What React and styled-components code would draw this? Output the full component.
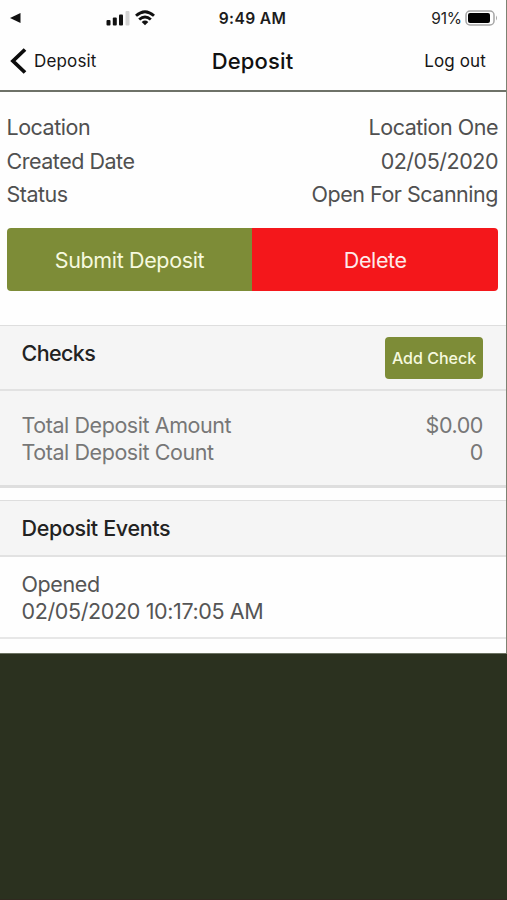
import React from 'react';
import styled, { createGlobalStyle } from 'styled-components';

const GlobalStyle = createGlobalStyle`
  * {
    box-sizing: border-box;
  }
  body {
    margin: 0;
    background: #2b311f;
    font-family: Inter, "Liberation Sans", sans-serif;
  }
`

const Phone = styled.div`
  width: 507px;
  height: 900px;
  display: flex;
  flex-direction: column;
  background: #2b311f;
  border-bottom: 1px solid #30291f;
  overflow: hidden;
`
const Screen = styled.div`
  height: 654px;
  background: #fefefe;
  border-right: 1px solid #7d8272;
  border-bottom: 1px solid #6c7261;
`

// status bar
const StatusBar = styled.div`
  height: 36px;
  display: grid;
  grid-template-columns: 1fr auto 1fr;
  align-items: center;
  padding: 0 10px 0 9px;
`
const Signals = styled.div`
  display: flex;
  align-items: center;
  padding-left: 1px;
`
const BackApp = styled.svg`
  margin-right: 85px;
`
const Bars = styled.svg`
  margin-right: 5px;
`
const Clock = styled.span`
  font-size: 15.6px;
  font-weight: 600;
  letter-spacing: .35px;
  color: #1c1c1c;
`
const Power = styled.div`
  display: flex;
  align-items: center;
  justify-content: flex-end;
  gap: 3px;
  margin-right: -2px;
  font-size: 15.5px;
  letter-spacing: -.1px;
  color: #222;
`

// navigation
const NavBar = styled.nav`
  height: 56px;
  display: grid;
  grid-template-columns: 1fr auto 1fr;
  align-items: center;
  padding: 0 11px 5px 10px;
  border-bottom: 2px solid #6e7268;
`
const NavLink = styled.a`
  display: flex;
  align-items: center;
  justify-self: ${props => props.$end ? 'end' : 'start'};
  margin-right: ${props => props.$end ? '9px' : '0'};
  gap: 7px;
  font-size: 17px;
  letter-spacing: .15px;
  color: #161616;
`
const Title = styled.h1`
  margin: 0;
  font-size: 22px;
  font-weight: 500;
  letter-spacing: .15px;
  color: #111;
`

// deposit summary
const Summary = styled.section`
  height: 136px;
  padding: 18px 8px 0 6.5px;
`
const SummaryRow = styled.div`
  height: 33.8px;
  display: flex;
  align-items: center;
  justify-content: space-between;
  font-size: 21.5px;
  letter-spacing: -.48px;
  color: #505050;
`
const Actions = styled.div`
  height: 63px;
  margin: 0 8px 0 6.5px;
  display: flex;
  border-radius: 4px;
  overflow: hidden;
`
const ActionButton = styled.button`
  width: ${props => props.$danger ? '246.5px' : '245px'};
  border: 0;
  padding: 0 0 0 1px;
  background: ${props => props.$danger ? '#f4171b' : '#7d8c37'};
  color: ${props => props.$danger ? '#fdeaea' : '#f6f9df'};
  font-family: inherit;
  font-size: 21.5px;
  letter-spacing: -.36px;
`

// checks and events
const SectionHeader = styled.header`
  height: ${props => props.$height};
  display: flex;
  align-items: center;
  justify-content: space-between;
  padding: 0 23px 0 21.5px;
  background: #f5f5f5;
  border-top: 1px solid #dedede;
  border-bottom: 2px solid #e2e2e2;
`
const Heading = styled.h2`
  margin: 0;
  padding-bottom: ${props => props.$lift || '0'};
  font-size: 21.5px;
  font-weight: 500;
  letter-spacing: ${props => props.$spacing || '-.35px'};
  color: #222;
`
const AddButton = styled.button`
  width: 98px;
  height: 42px;
  border: 0;
  border-radius: 4px;
  padding: 0;
  background: #7d8c37;
  color: #f6f9df;
  font-family: inherit;
  font-size: 16px;
  font-weight: 500;
  white-space: nowrap;
`
const Checks = styled.section`
  margin-top: 34px;
`
const Totals = styled.div`
  height: 97px;
  padding: 21px 23px 0 21.5px;
  background: #f5f5f5;
  border-bottom: 3px solid #dedede;
`
const TotalRow = styled.div`
  display: flex;
  justify-content: space-between;
  font-size: 21.5px;
  line-height: 27px;
  letter-spacing: -.43px;
  color: #777;
`
const Events = styled.section`
  margin-top: 12px;
`
const Event = styled.div`
  height: 82px;
  padding: 14px 22px 0 21.5px;
  display: flex;
  flex-direction: column;
  border-bottom: 2px solid #e7e7e7;
  font-size: 21.5px;
  line-height: 27px;
  letter-spacing: -.37px;
  color: #555;
`

const details = [
  { label: 'Location', value: 'Location One' },
  { label: 'Created Date', value: '02/05/2020' },
  { label: 'Status', value: 'Open For Scanning' },
]

const totals = [
  { label: 'Total Deposit Amount', value: '$0.00' },
  { label: 'Total Deposit Count', value: '0' },
]

export default class App extends React.Component {
  render() {
    return (
      <Phone>
        <GlobalStyle />
        <Screen>
          <StatusBar>
            <Signals>
              <BackApp width="11" height="12" viewBox="0 0 11 12">
                <path d="M0 6 L10.5 1 V11 Z" fill="#111" />
              </BackApp>
              <Bars width="24" height="16" viewBox="0 0 24 16">
                <rect x="0.5" y="10" width="4" height="5.5" rx="1" fill="#111" />
                <rect x="6.8" y="7.5" width="4" height="8" rx="1" fill="#111" />
                <rect x="13" y="4.5" width="4" height="11" rx="1" fill="#111" />
                <rect x="19.5" y="1" width="4" height="14.5" rx="1" fill="#d4d4d4" />
              </Bars>
              <svg width="20" height="16" viewBox="0 0 20 16" fill="none" stroke="#111" strokeWidth="2.9">
                <path d="M1 5.8 Q10 -2.4 19 5.8" />
                <path d="M4.2 9.5 Q10 4.3 15.8 9.5" />
                <path d="M6.7 11.9 Q10 9.2 13.3 11.9 L10 15.2 Z" fill="#111" stroke="none" />
              </svg>
            </Signals>
            <Clock>9:49 AM</Clock>
            <Power>
              91%
              <svg width="33" height="16" viewBox="0 0 33 16">
                <rect x="1" y="1" width="28" height="14" rx="4" fill="none" stroke="#a5a5a5" strokeWidth="1.5" />
                <rect x="3" y="3" width="22" height="10" rx="2" fill="#000" />
                <path d="M31 5.5 Q33 8 31 10.5 Z" fill="#a5a5a5" />
              </svg>
            </Power>
          </StatusBar>
          <NavBar>
            <NavLink>
              <svg width="17" height="26" viewBox="0 0 17 26" fill="none" stroke="#0c0c0c" strokeWidth="3.8">
                <path d="M15 1.5 L3 13 L15 24.5" />
              </svg>
              Deposit
            </NavLink>
            <Title>Deposit</Title>
            <NavLink $end>Log out</NavLink>
          </NavBar>
          <Summary>
            {details.map(item => (
              <SummaryRow key={item.label}>
                <span>{item.label}</span>
                <span>{item.value}</span>
              </SummaryRow>
            ))}
          </Summary>
          <Actions>
            <ActionButton>Submit Deposit</ActionButton>
            <ActionButton $danger>Delete</ActionButton>
          </Actions>
          <Checks>
            <SectionHeader $height="66px">
              <Heading $lift="9px" $spacing="-.6px">Checks</Heading>
              <AddButton>Add Check</AddButton>
            </SectionHeader>
            <Totals>
              {totals.map(item => (
                <TotalRow key={item.label}>
                  <span>{item.label}</span>
                  <span>{item.value}</span>
                </TotalRow>
              ))}
            </Totals>
          </Checks>
          <Events>
            <SectionHeader $height="57px">
              <Heading>Deposit Events</Heading>
            </SectionHeader>
            <Event>
              <span>Opened</span>
              <span>02/05/2020 10:17:05 AM</span>
            </Event>
          </Events>
        </Screen>
      </Phone>
    )
  }
}
